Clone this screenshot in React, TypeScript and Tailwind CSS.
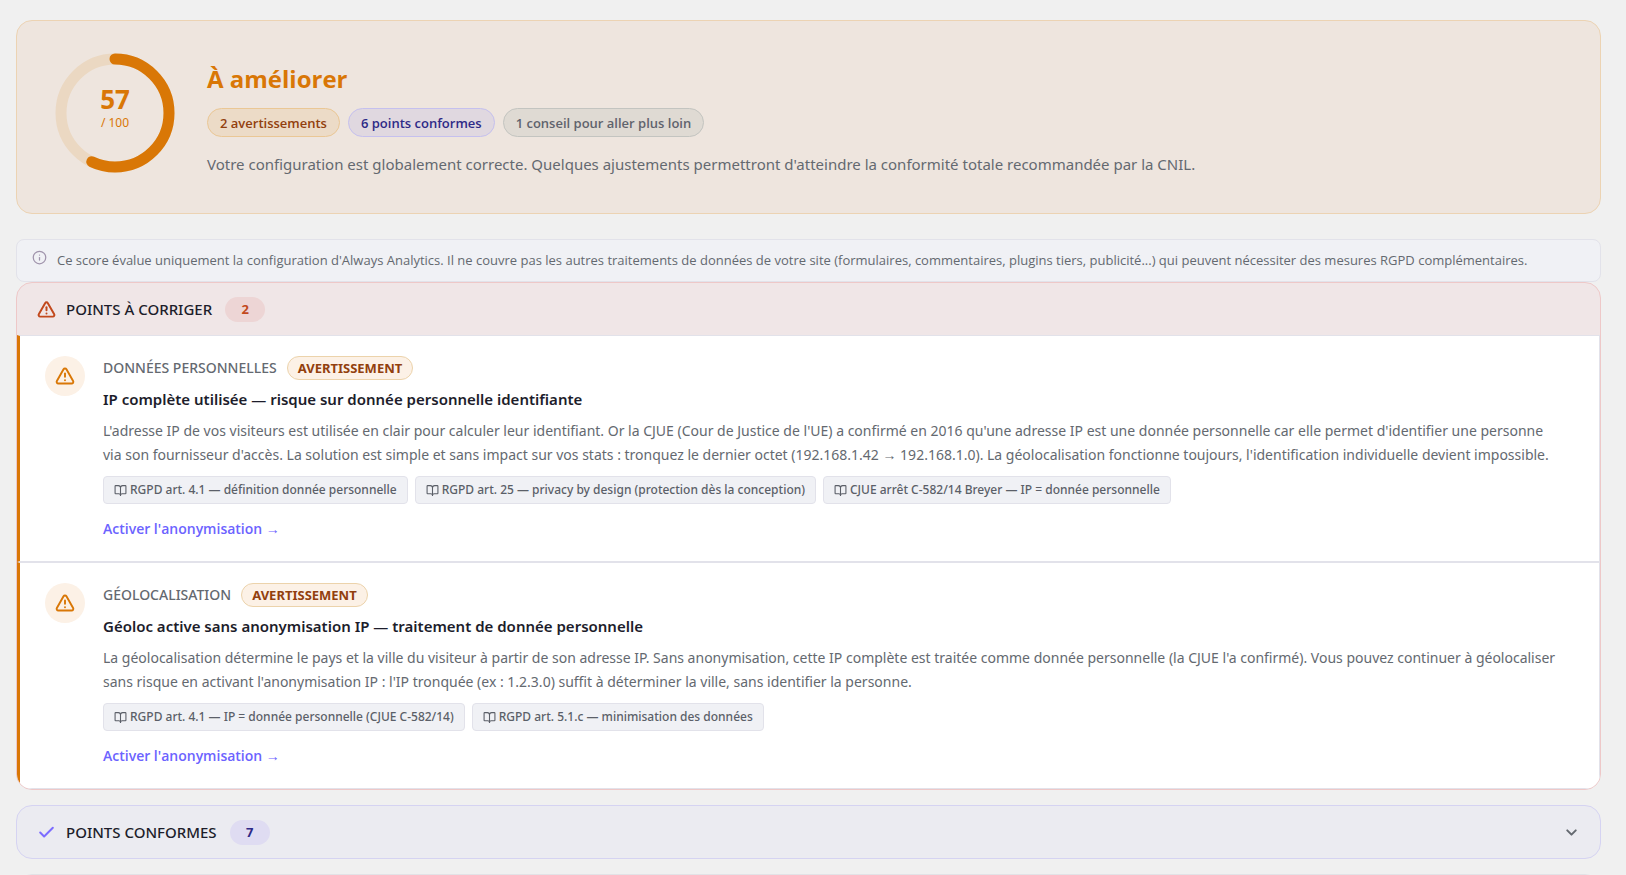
import React from "react";
import { BookOpen, Check, ChevronDown, Info, TriangleAlert } from "lucide-react";

const SCORE = 57;
const RADIUS = 54;

interface Finding {
  category: string;
  title: string;
  description: string;
  references: string[];
}

const findings: Finding[] = [
  {
    category: "DONNÉES PERSONNELLES",
    title: "IP complète utilisée — risque sur donnée personnelle identifiante",
    description:
      "L'adresse IP de vos visiteurs est utilisée en clair pour calculer leur identifiant. Or la CJUE (Cour de Justice de l'UE) a confirmé en 2016 qu'une adresse IP est une donnée personnelle car elle permet d'identifier une personne via son fournisseur d'accès. La solution est simple et sans impact sur vos stats : tronquez le dernier octet (192.168.1.42 → 192.168.1.0). La géolocalisation fonctionne toujours, l'identification individuelle devient impossible.",
    references: [
      "RGPD art. 4.1 — définition donnée personnelle",
      "RGPD art. 25 — privacy by design (protection dès la conception)",
      "CJUE arrêt C-582/14 Breyer — IP = donnée personnelle",
    ],
  },
  {
    category: "GÉOLOCALISATION",
    title: "Géoloc active sans anonymisation IP — traitement de donnée personnelle",
    description:
      "La géolocalisation détermine le pays et la ville du visiteur à partir de son adresse IP. Sans anonymisation, cette IP complète est traitée comme donnée personnelle (la CJUE l'a confirmé). Vous pouvez continuer à géolocaliser sans risque en activant l'anonymisation IP : l'IP tronquée (ex : 1.2.3.0) suffit à déterminer la ville, sans identifier la personne.",
    references: [
      "RGPD art. 4.1 — IP = donnée personnelle (CJUE C-582/14)",
      "RGPD art. 5.1.c — minimisation des données",
    ],
  },
];

const ScoreRing = () => {
  const length = 2 * Math.PI * RADIUS;

  return (
    <div className="relative size-[120px] shrink-0">
      <svg viewBox="0 0 120 120" className="size-full -rotate-90" fill="none">
        <circle cx="60" cy="60" r={RADIUS} stroke="#ebd8c2" strokeWidth="11" />
        <circle
          cx="60"
          cy="60"
          r={RADIUS}
          stroke="#d97706"
          strokeWidth="11"
          strokeLinecap="round"
          strokeDasharray={`${(length * SCORE) / 100} ${length}`}
        />
      </svg>
      <div className="absolute inset-0 flex flex-col items-center justify-center pb-3 text-[#d97706]">
        <span className="text-[26px] font-bold leading-8">{SCORE}</span>
        <span className="text-xs leading-4">/ 100</span>
      </div>
    </div>
  );
};

const FindingItem = ({ category, title, description, references }: Finding) => {
  return (
    <article className="flex gap-[18px] border border-l-[3px] border-[#e2e2ea] border-l-[#d97706] bg-white py-5 pl-[25px] pr-10">
      <div className="flex size-10 shrink-0 items-center justify-center rounded-full bg-[#fcf1e6]">
        <TriangleAlert size={20} color="#d97706" strokeWidth={2.3} />
      </div>
      <div className="min-w-0 flex-1">
        <div className="flex items-center gap-2.5">
          <span className="text-sm font-medium leading-6 text-[#646970]">{category}</span>
          <span className="rounded-full border border-[#ecd3ab] bg-[#fcf1e6] px-2.5 text-[13px] font-bold leading-[22px] text-[#92400e]">
            AVERTISSEMENT
          </span>
        </div>
        <h3 className="mt-[7px] text-[15px] font-semibold leading-6 text-[#1d1d2b]">{title}</h3>
        <p className="mt-2 text-sm leading-6 text-[#646970]">{description}</p>
        <ul className="mt-[9px] flex flex-wrap gap-[7px]">
          {references.map((reference) => (
            <li
              key={reference}
              className="flex items-center gap-[3px] rounded border border-[#e2e2ea] bg-[#f0f1f5] px-2.5 text-xs font-medium leading-[26px] text-[#5b5f68]"
            >
              <BookOpen size={13} />
              {reference}
            </li>
          ))}
        </ul>
        <a
          href="#anonymisation"
          className="mt-[13px] inline-block font-['Open_Sans',sans-serif] text-sm font-semibold leading-6 text-[#6c63ff]"
        >
          Activer l'anonymisation →
        </a>
      </div>
    </article>
  );
};

const App = () => {
  return (
    <main className="h-screen overflow-hidden bg-[#f0f0f0] pl-4 pr-[25px] pt-5 font-['Noto_Sans',sans-serif]">
      <section className="flex items-start gap-8 rounded-2xl border border-[#ecd3b3] bg-[#eee5de] px-[38px] pb-9 pt-8">
        <ScoreRing />
        <div className="pt-2">
          <h1 className="font-['Open_Sans',sans-serif] text-2xl font-bold leading-9 text-[#d97706]">À améliorer</h1>
          <div className="mt-[11px] flex flex-wrap gap-2 font-['Open_Sans',sans-serif] text-[13px] font-semibold leading-[25px]">
            <span className="rounded-full border border-[#eac795] bg-[#ecdbc7] px-3 pt-0.5 text-[#92400e]">
              2 avertissements
            </span>
            <span className="rounded-full border border-[#c5c0ee] bg-[#e0d8e0] px-3 pt-0.5 text-[#2e2a87]">
              6 points conformes
            </span>
            <span className="rounded-full border border-[#c3c4c0] bg-[#dfdad3] px-3 pt-0.5 text-[#5f636d]">
              1 conseil pour aller plus loin
            </span>
          </div>
          <p className="mb-px mt-[15px] text-[15px] leading-6 text-[#646970]">
            Votre configuration est globalement correcte. Quelques ajustements permettront d'atteindre la conformité
            totale recommandée par la CNIL.
          </p>
        </div>
      </section>

      <aside className="mt-[25px] flex items-start gap-2.5 rounded-lg border border-[#e2e2ea] bg-[#f0f1f5] px-[15px] py-2.5">
        <Info size={15} color="#a094ac" className="shrink-0" />
        <p className="font-['Open_Sans',sans-serif] text-[13px] leading-[21px] text-[#646970]">
          Ce score évalue uniquement la configuration d'Always Analytics. Il ne couvre pas les autres traitements de
          données de votre site (formulaires, commentaires, plugins tiers, publicité...) qui peuvent nécessiter des
          mesures RGPD complémentaires.
        </p>
      </aside>

      <section className="overflow-hidden rounded-2xl border border-[#eec8c8] bg-[#f0e6e7]">
        <header className="flex h-[52px] items-center px-5">
          <TriangleAlert size={19} color="#c2491d" strokeWidth={2.5} />
          <h2 className="ml-2.5 text-[15px] font-medium text-[#1d1d2b]">POINTS À CORRIGER</h2>
          <span className="ml-[13px] w-10 rounded-full bg-[#edd5d5] text-center text-[13px] font-bold leading-[25px] text-[#c2491d]">
            2
          </span>
        </header>
        {findings.map((finding) => (
          <FindingItem key={finding.title} {...finding} />
        ))}
      </section>

      <section className="mt-[15px] rounded-2xl border border-[#d5d3f2] bg-[#ebebf1]">
        <button type="button" className="flex h-[52px] w-full items-center px-5">
          <Check size={19} color="#7c6cff" strokeWidth={2.5} />
          <span className="ml-2.5 text-[15px] font-medium text-[#1d1d2b]">POINTS CONFORMES</span>
          <span className="ml-[13px] w-10 rounded-full bg-[#dfdcf2] text-center text-[13px] font-bold leading-[25px] text-[#2e2a87]">
            7
          </span>
          <ChevronDown size={17} color="#646970" strokeWidth={2.8} className="ml-auto" />
        </button>
      </section>

      <section className="mt-[15px] h-[52px] rounded-2xl border border-[#e2e2e6] bg-[#ededef]" />
    </main>
  );
};

export default App;
